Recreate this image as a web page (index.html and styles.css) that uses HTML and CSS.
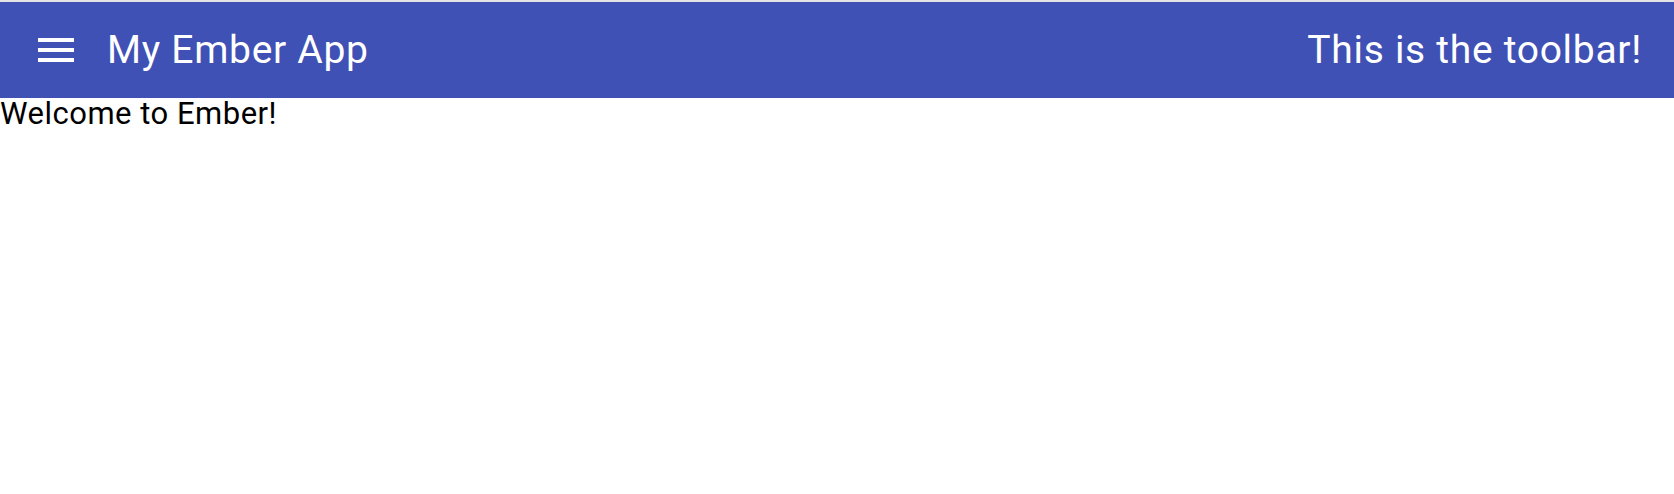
FILE: index.html
```html
<!DOCTYPE html>
<html>
<head>
<meta charset="utf-8">
<link rel="stylesheet" href="styles.css">
</head>
<body>
<div class="topline"></div>
<header class="toolbar">
  <button class="menu-btn" aria-label="Menu">
    <svg width="48" height="48" viewBox="0 0 24 24"><path fill="#fff" d="M3 6h18v2H3zM3 11h18v2H3zM3 16h18v2H3z"/></svg>
  </button>
  <h2 class="title">My Ember App</h2>
  <div class="spacer"></div>
  <h2 class="title">This is the toolbar!</h2>
</header>
<main class="content">Welcome to Ember!</main>
</body>
</html>
```
FILE: styles.css
```css
html, body {
  margin: 0;
  padding: 0;
  background: #fff;
  font-family: Roboto, "Noto Sans", sans-serif;
}
.topline {
  height: 2px;
  background: #e4e4e4;
}
.toolbar {
  display: flex;
  align-items: center;
  height: 96px;
  background: #3f51b5;
  color: #fff;
  padding: 0 32px 0 32px;
  box-sizing: border-box;
}
.menu-btn {
  width: 48px;
  height: 48px;
  padding: 0;
  margin: 0;
  border: 0;
  background: transparent;
  display: flex;
}
.title {
  margin: 0 0 0 27px;
  font-size: 39px;
  letter-spacing: 0.7px;
  font-weight: 400;
  line-height: 1;
}
.spacer {
  flex: 1;
}
.content {
  font-size: 31px;
  letter-spacing: 0.5px;
  line-height: 1.05;
  color: #000;
}
```
